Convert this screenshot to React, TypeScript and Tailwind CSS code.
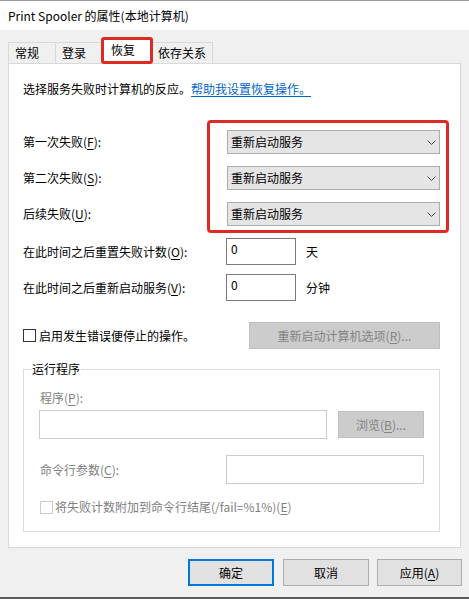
import React from 'react';

// Access-key letter, underlined like a Win32 dialog label
const U = ({ k }: { k: string }) => <span className="underline underline-offset-[2px]">{k}</span>;

const Chevron = () => (
  <svg width="9" height="5" viewBox="0 0 9 5" className="shrink-0">
    <path d="M0.5 0.5 L4.5 4.5 L8.5 0.5" fill="none" stroke="#4a4a4a" strokeWidth="1" />
  </svg>
);

const failRows = [
  { label: '第一次失败', key: 'F' },
  { label: '第二次失败', key: 'S' },
  { label: '后续失败', key: 'U' },
];

const Dropdown = ({ value }: { value: string }) => (
  <div className="w-[213px] h-[24px] bg-[#e5e5e5] border border-[#adadad] flex items-center justify-between pl-[3px] pr-[3px]">
    <span>{value}</span>
    <Chevron />
  </div>
);

const NumberBox = ({ value }: { value: string }) => (
  <div className="w-[70px] h-[27px] border border-[#7a7a7a] bg-white pl-[4px] pt-[2px]">{value}</div>
);

const App = () => {
  return (
    <div className="w-[469px] h-[599px] bg-[#f0f0f0] flex flex-col border-t border-[#9a9a9a] border-b-2 border-b-[#5a5a5a] text-[12px] leading-[16px] text-black font-['Noto_Sans_CJK_SC','Noto_Sans',sans-serif]">
      {/* Title bar */}
      <div className="h-[29px] bg-white flex items-center pl-[8px] shrink-0">
        Print Spooler 的属性(本地计算机)
      </div>

      <div className="px-[8px] shrink-0">
        {/* Tabs */}
        <div className="mt-[7px] h-[26px] flex items-end">
          <div className="w-[47px] h-[21px] border-t border-l border-[#d9d9d9] pl-[6px] pt-[2px]">常规</div>
          <div className="w-[46px] h-[21px] border-t border-l border-[#d9d9d9] pl-[6px] pt-[2px]">登录</div>
          <div className="relative z-10 w-[52px] h-[27px] -mb-[1px] bg-white border-[3px] border-[#dc2b22] rounded-[3px] pl-[7px] pt-[2px]">恢复</div>
          <div className="w-[60px] h-[21px] border-t border-r border-[#d9d9d9] pl-[5px] pt-[2px]">依存关系</div>
        </div>

        {/* Tab panel */}
        <div className="relative w-[453px] h-[485px] border border-[#d9d9d9] bg-white pt-[17px] pl-[14px] pr-[20px] flex flex-col">
          <p>
            选择服务失败时计算机的反应。
            <a className="text-[#0066cc] underline underline-offset-[2px]">帮助我设置恢复操作。</a>
          </p>

          <div className="mt-[33px] flex flex-col gap-[12px]">
            {failRows.map((r) => (
              <div key={r.key} className="h-[24px] flex items-center justify-between">
                <span>
                  {r.label}(<U k={r.key} />):
                </span>
                <Dropdown value="重新启动服务" />
              </div>
            ))}
          </div>

          <div className="mt-[12px] h-[27px] flex items-center">
            <span className="w-[203px]">
              在此时间之后重置失败计数(<U k="O" />):
            </span>
            <NumberBox value="0" />
            <span className="ml-[10px]">天</span>
          </div>
          <div className="mt-[9px] h-[27px] flex items-center">
            <span className="w-[203px]">
              在此时间之后重新启动服务(<U k="V" />):
            </span>
            <NumberBox value="0" />
            <span className="ml-[10px]">分钟</span>
          </div>

          <div className="mt-[21px] h-[27px] flex items-center justify-between">
            <div className="flex items-center">
              <div className="w-[13px] h-[13px] border border-[#333333] bg-white" />
              <span className="ml-[3px]">启用发生错误便停止的操作。</span>
            </div>
            <div className="w-[191px] h-[27px] bg-[#cccccc] border border-[#bfbfbf] flex items-center justify-center text-[#838383]">
              <span>
                重新启动计算机选项(<U k="R" />)...
              </span>
            </div>
          </div>

          {/* Run program group */}
          <fieldset className="mt-[12px] border border-[#dcdcdc] p-0">
            <legend className="ml-[7px] px-[1px]">运行程序</legend>
            <div className="px-[15px] pb-[16px] text-[#808080]">
              <div className="mt-[13px] pl-[1px]">
                程序(<U k="P" />):
              </div>
              <div className="mt-[4px] flex items-center justify-between">
                <div className="w-[288px] h-[29px] border border-[#cccccc]" />
                <div className="w-[86px] h-[27px] bg-[#cccccc] border border-[#bfbfbf] flex items-center justify-center text-[#838383]">
                  <span>
                    浏览(<U k="B" />)...
                  </span>
                </div>
              </div>
              <div className="mt-[16px] h-[29px] flex items-center justify-between">
                <span className="pl-[1px]">
                  命令行参数(<U k="C" />):
                </span>
                <div className="w-[198px] h-[29px] border border-[#cccccc]" />
              </div>
              <div className="mt-[15px] flex items-center">
                <div className="ml-[1px] w-[13px] h-[13px] border border-[#cccccc]" />
                <span className="ml-[2px]">
                  将失败计数附加到命令行结尾(/fail=%1%)(<U k="E" />)
                </span>
              </div>
            </div>
          </fieldset>

          {/* Red annotation around the failure actions */}
          <div className="absolute left-[198px] top-[56px] w-[242px] h-[113px] border-[3px] border-[#dc2b22] rounded-[4px] pointer-events-none" />
        </div>
      </div>

      {/* Dialog buttons */}
      <div className="mt-[11px] flex justify-end pr-[7px] shrink-0">
        <button className="w-[86px] h-[27px] bg-[#e1e1e1] border-2 border-[#0078d7]">确定</button>
        <button className="ml-[9px] w-[86px] h-[27px] bg-[#e1e1e1] border border-[#adadad]">取消</button>
        <button className="ml-[8px] w-[85px] h-[27px] bg-[#e1e1e1] border border-[#adadad]">
          应用(<U k="A" />)
        </button>
      </div>
    </div>
  );
};

export default App;
